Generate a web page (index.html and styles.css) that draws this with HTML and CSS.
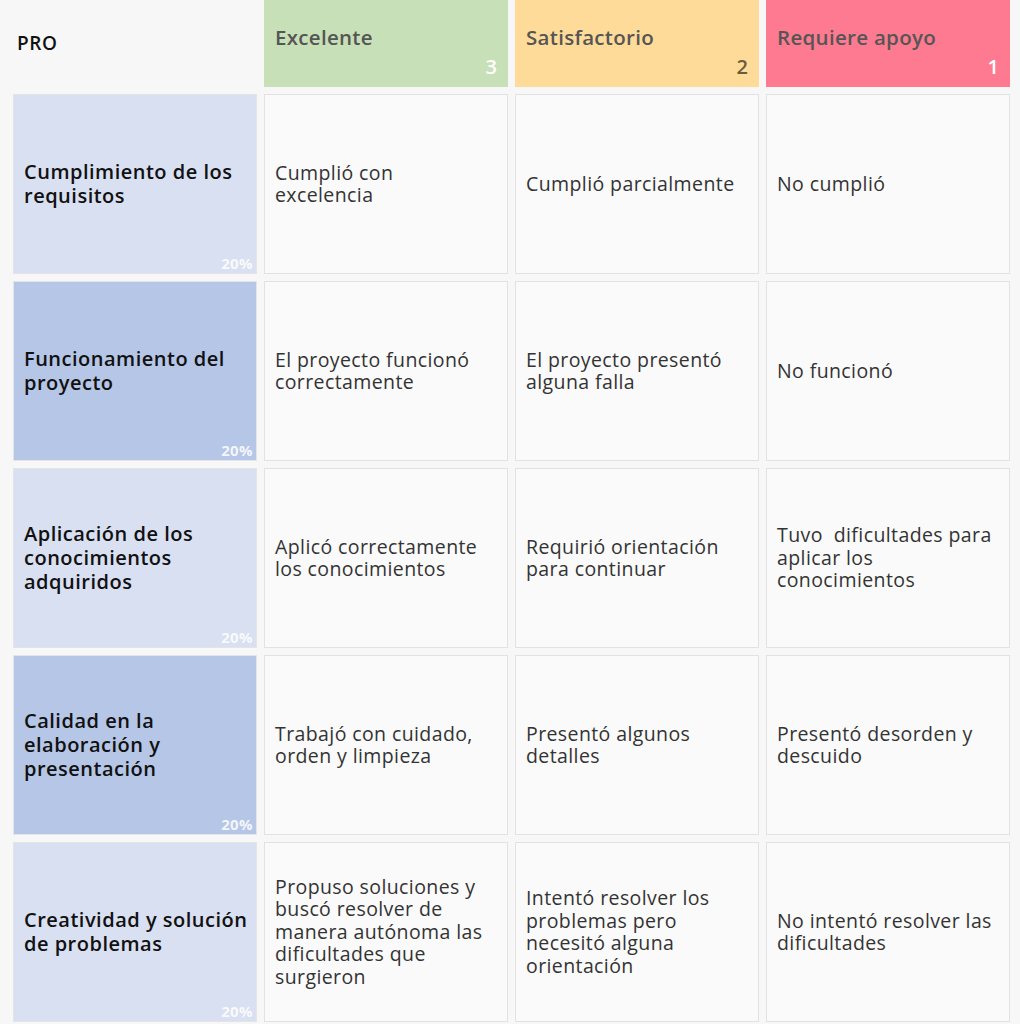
FILE: index.html
```html
<!DOCTYPE html>
<html lang="es">
<head>
<meta charset="utf-8">
<title>Rúbrica PRO</title>
<link rel="stylesheet" href="styles.css">
</head>
<body>
<div class="rubric">
  <div class="corner">PRO</div>
  <div class="level level-3"><span class="level-title">Excelente</span><span class="level-num">3</span></div>
  <div class="level level-2"><span class="level-title">Satisfactorio</span><span class="level-num">2</span></div>
  <div class="level level-1"><span class="level-title">Requiere apoyo</span><span class="level-num">1</span></div>

  <div class="crit crit-light"><span class="crit-title">Cumplimiento de los requisitos</span><span class="weight">20%</span></div>
  <div class="cell"><span>Cumplió con excelencia</span></div>
  <div class="cell"><span>Cumplió parcialmente</span></div>
  <div class="cell"><span>No cumplió</span></div>

  <div class="crit crit-dark"><span class="crit-title">Funcionamiento del proyecto</span><span class="weight">20%</span></div>
  <div class="cell"><span>El proyecto funcionó correctamente</span></div>
  <div class="cell"><span>El proyecto presentó alguna falla</span></div>
  <div class="cell"><span>No funcionó</span></div>

  <div class="crit crit-light"><span class="crit-title">Aplicación de los conocimientos adquiridos</span><span class="weight">20%</span></div>
  <div class="cell"><span>Aplicó correctamente los conocimientos</span></div>
  <div class="cell"><span>Requirió orientación para continuar</span></div>
  <div class="cell"><span>Tuvo&nbsp; dificultades para aplicar los conocimientos</span></div>

  <div class="crit crit-dark"><span class="crit-title">Calidad en la elaboración y presentación</span><span class="weight">20%</span></div>
  <div class="cell"><span>Trabajó con cuidado, orden y limpieza</span></div>
  <div class="cell"><span>Presentó algunos detalles</span></div>
  <div class="cell"><span>Presentó desorden y descuido</span></div>

  <div class="crit crit-light"><span class="crit-title">Creatividad y solución de problemas</span><span class="weight">20%</span></div>
  <div class="cell"><span>Propuso soluciones y buscó resolver de manera autónoma las dificultades que surgieron</span></div>
  <div class="cell"><span>Intentó resolver los problemas pero necesitó alguna orientación</span></div>
  <div class="cell"><span>No intentó resolver las dificultades</span></div>
</div>
</body>
</html>
```

FILE: styles.css
```css
html, body {
  margin: 0;
  padding: 0;
  background: #f7f7f7;
}

body {
  font-family: "Open Sans", "Noto Sans", sans-serif;
  color: #222;
}

.rubric {
  display: grid;
  grid-template-columns: repeat(4, 244px);
  grid-template-rows: 87px repeat(5, 180px);
  column-gap: 7px;
  row-gap: 7px;
  padding: 0 10px 0 13px;
}

.corner {
  display: flex;
  align-items: center;
  padding-left: 4px;
  padding-bottom: 2px;
  font-size: 19px;
  font-weight: 600;
  letter-spacing: 0.6px;
  color: #111;
}

.level {
  position: relative;
  box-sizing: border-box;
  padding: 23px 11px 0 11px;
  color: #555;
}

.level-title {
  font-size: 20.5px;
  font-weight: 600;
  letter-spacing: 0.3px;
}

.level-num {
  position: absolute;
  right: 11px;
  bottom: 7px;
  font-size: 20px;
  font-weight: 600;
}

.level-3 { background: #c8e0b7; }
.level-3 .level-num { color: #ffffff; }
.level-2 { background: #fedb98; }
.level-2 .level-num { color: #6a5c3e; }
.level-1 { background: #fe7a90; }
.level-1 .level-num { color: #ffffff; }

.crit {
  position: relative;
  box-sizing: border-box;
  display: flex;
  align-items: center;
  padding: 0 5px 0 10px;
  border: 1px solid #e4e4e8;
  font-size: 20px;
  font-weight: 600;
  letter-spacing: 0.5px;
  line-height: 24px;
  color: #111;
}

.crit-light { background: #d9e0f1; }
.crit-dark { background: #b5c6e7; }

.weight {
  position: absolute;
  right: 3px;
  bottom: 1px;
  font-size: 15px;
  font-weight: 700;
  letter-spacing: 0.4px;
  line-height: 18px;
  color: rgba(255, 255, 255, 0.85);
}

.cell {
  box-sizing: border-box;
  display: flex;
  align-items: center;
  padding: 0 12px 0 10px;
  background: #fafafa;
  border: 1px solid #e2e2e2;
  font-size: 19.5px;
  letter-spacing: 0.4px;
  line-height: 22.5px;
  color: #333;
}
```
